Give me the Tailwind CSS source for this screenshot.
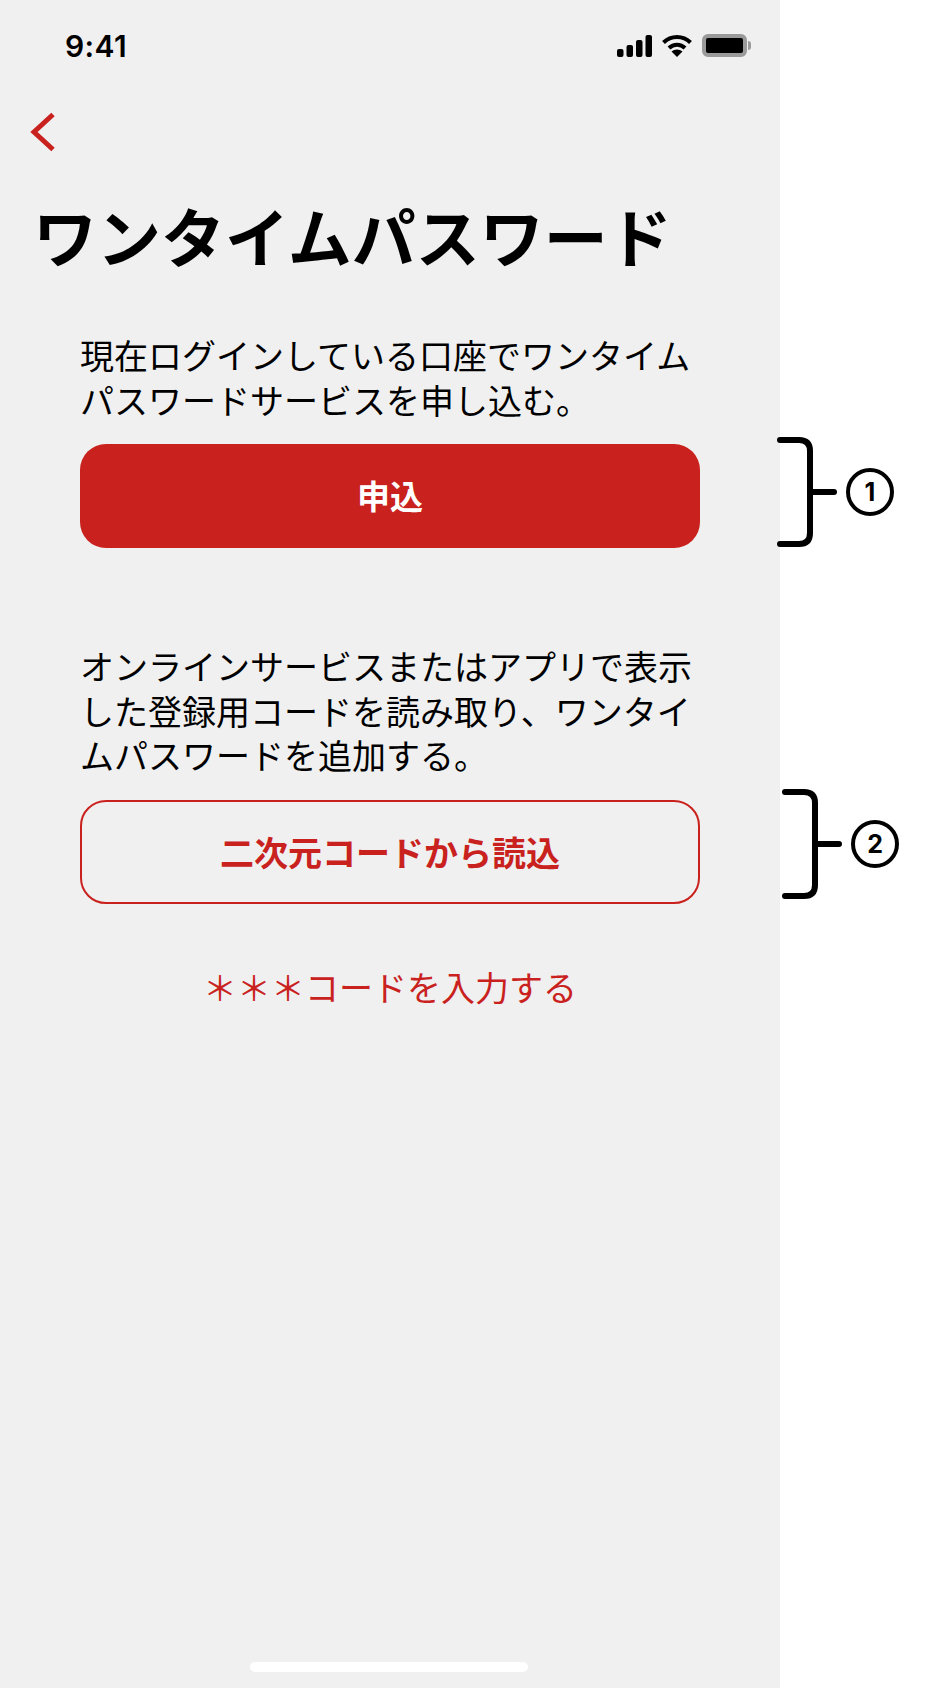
<!DOCTYPE html>
<html lang="ja">
<head>
    <meta charset="UTF-8">
    <meta name="viewport" content="width=device-width, initial-scale=1.0">
    <title>ワンタイムパスワード</title>
    <script src="https://cdn.jsdelivr.net/npm/@tailwindcss/browser@4"></script>
</head>
<body class="bg-white font-['Noto_Sans_CJK_JP','Noto_Sans',sans-serif] text-black">
    <div class="relative w-[936px] h-[1688px] overflow-hidden">

        <!-- Phone screen -->
        <main class="relative flex flex-col w-[780px] h-[1688px] bg-[#f0f0f0]">

            <!-- Status bar -->
            <div class="flex items-center justify-between h-[91px] pl-[65px] pr-[29px]">
                <span class="font-['Inter',sans-serif] font-semibold text-[30px] leading-none tracking-[0.4px]">9:41</span>
                <div class="flex items-center gap-[10px]">
                    <svg width="35" height="22" viewBox="0 0 35 22" fill="#000">
                        <rect x="0" y="14" width="6.5" height="8" rx="2"/>
                        <rect x="9.5" y="10" width="6.5" height="12" rx="2"/>
                        <rect x="19" y="5" width="6.5" height="17" rx="2"/>
                        <rect x="28.5" y="0" width="6.5" height="22" rx="2"/>
                    </svg>
                    <svg width="30" height="23" viewBox="0 0 30 23" fill="none" stroke="#000" stroke-width="4">
                        <path d="M1.5 8.5 C9 1 21 1 28.5 8.5"/>
                        <path d="M7 14 C11.5 9.5 18.5 9.5 23 14"/>
                        <path d="M15 23 L9.5 17.5 C12.5 14.8 17.5 14.8 20.5 17.5 Z" fill="#000" stroke="none"/>
                    </svg>
                    <div class="flex items-center">
                        <div class="w-[45px] h-[23px] rounded-[6px] border-4 border-[#9a9a9a] bg-black"></div>
                        <div class="w-[3px] h-[9px] ml-[1px] rounded-r-sm bg-[#9a9a9a]"></div>
                    </div>
                </div>
            </div>

            <!-- Back chevron -->
            <div class="h-[60px] pt-[21px] pl-[29px]">
                <svg width="27" height="40" viewBox="0 0 27 40" fill="none" stroke="#c9221e" stroke-width="5" stroke-linejoin="miter">
                    <path d="M24 2.5 L5 20 L24 37.5"/>
                </svg>
            </div>

            <!-- Title -->
            <h1 class="mt-[41px] pl-[33px] text-[64px] leading-[84px] font-bold whitespace-nowrap">ワンタイムパスワード</h1>

            <!-- Apply section -->
            <section class="mt-[57px] px-[80px]">
                <p class="text-[34px] leading-[44.5px] whitespace-nowrap">現在ログインしている口座でワンタイム<br>パスワードサービスを申し込む。</p>
                <button class="flex items-center justify-center w-[620px] h-[104px] mt-[22px] rounded-[26px] bg-[#c9221e] text-white text-[33px] font-bold">申込</button>
            </section>

            <!-- Registration code section -->
            <section class="mt-[96px] px-[80px]">
                <p class="text-[34px] leading-[44.5px] whitespace-nowrap">オンラインサービスまたはアプリで表示<br>した登録用コードを読み取り、ワンタイ<br>ムパスワードを追加する。</p>
                <button class="flex items-center justify-center w-[620px] h-[104px] mt-[22px] rounded-[26px] border-2 border-[#c9221e] text-[#c9221e] text-[34px] font-bold">二次元コードから読込</button>
                <p class="mt-[59px] text-center text-[#c9221e] text-[34px] leading-[48px] whitespace-nowrap">＊＊＊コードを入力する</p>
            </section>

            <!-- Home indicator -->
            <div class="absolute left-[250px] bottom-[16px] w-[278px] h-[10px] rounded-full bg-white"></div>
        </main>

        <!-- Annotation 1 -->
        <svg class="absolute left-[770px] top-[430px]" width="80" height="125" viewBox="0 0 80 125" fill="none" stroke="#000" stroke-width="6" stroke-linecap="round">
            <path d="M10 10 H29 Q40 10 40 21 V103 Q40 114 29 114 H10"/>
            <path d="M40 62 H64"/>
        </svg>
        <div class="absolute left-[846px] top-[468px] flex items-center justify-center w-[48px] h-[48px] rounded-full border-[4px] border-black font-['Inter',sans-serif] text-[25px] font-bold leading-none">1</div>

        <!-- Annotation 2 -->
        <svg class="absolute left-[775px] top-[782px]" width="80" height="125" viewBox="0 0 80 125" fill="none" stroke="#000" stroke-width="6" stroke-linecap="round">
            <path d="M10 10 H29 Q40 10 40 21 V103 Q40 114 29 114 H10"/>
            <path d="M40 62 H64"/>
        </svg>
        <div class="absolute left-[851px] top-[820px] flex items-center justify-center w-[48px] h-[48px] rounded-full border-[4px] border-black font-['Inter',sans-serif] text-[25px] font-bold leading-none">2</div>
    </div>
</body>
</html>
